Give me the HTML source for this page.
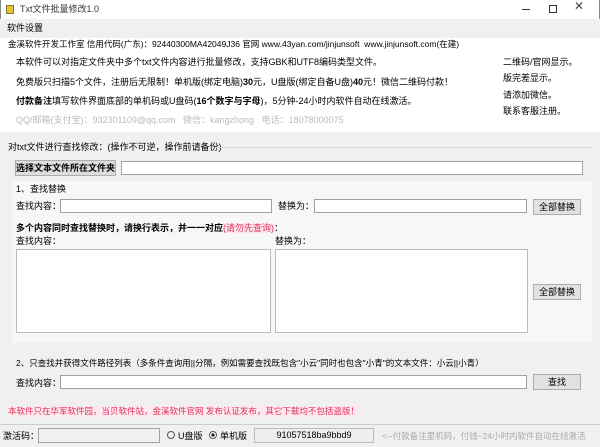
<!DOCTYPE html>
<html><head><meta charset="utf-8"><style>
*{margin:0;padding:0;box-sizing:border-box}
body{width:600px;height:447px;background:#f0f0f0;font-family:"Liberation Sans","Noto Sans CJK SC",sans-serif;font-size:9px;color:#000;position:relative;overflow:hidden}
.a{position:absolute;white-space:nowrap;line-height:11px}
.in{position:absolute;background:#fff;border:1px solid #a0a0a0}
.btn{position:absolute;background:#e1e1e1;border:1px solid #adadad;text-align:center;line-height:14px;font-size:9px}
b{font-weight:bold}
</style></head><body>
<div class="a" style="left:0;top:0;width:600px;height:19px;background:#fff;border-left:1px solid #888;border-right:1px solid #888"></div>
<div class="a" style="left:6px;top:5px;width:8px;height:9px;background:#e0c040;border:1px solid #8a7a20"></div>
<div class="a" style="left:20px;top:4px;color:#333">Txt文件批量修改1.0</div>
<div class="a" style="left:522px;top:9px;width:8px;height:1px;background:#333"></div>
<div class="a" style="left:549px;top:5px;width:8px;height:8px;border:1px solid #333"></div>
<div class="a" style="left:574px;top:1px;font-size:12px;color:#444">✕</div>
<div class="a" style="left:0;top:19px;width:600px;height:18px;background:#f0f0f0"></div>
<div class="a" style="left:7px;top:23px">软件设置</div>
<div class="a" style="left:0;top:38px;width:600px;height:94px;background:#fff"></div>
<div class="a" style="left:8px;top:39px;font-size:8.5px">金溪软件开发工作室 信用代码(广东)：92440300MA42049J36 官网 www.43yan.com/jinjunsoft &nbsp;www.jinjunsoft.com(在建)</div>
<div class="a" style="left:16px;top:57px">本软件可以对指定文件夹中多个txt文件内容进行批量修改，支持GBK和UTF8编码类型文件。</div>
<div class="a" style="left:16px;top:77px">免费版只扫描5个文件，注册后无限制！单机版(绑定电脑)<b>30</b>元，U盘版(绑定自备U盘)<b>40</b>元！微信二维码付款！</div>
<div class="a" style="left:16px;top:96px"><b>付款备注</b>填写软件界面底部的单机码或U盘码(<b>16个数字与字母</b>)，5分钟-24小时内软件自动在线激活。</div>
<div class="a" style="left:16px;top:115px;color:#bbb">QQ/邮箱(支付宝)：932301109@qq.com &nbsp;&nbsp;微信：kangzhong &nbsp;&nbsp;电话：18078000075</div>
<div class="a" style="left:503px;top:57px">二维码/官网显示。</div>
<div class="a" style="left:503px;top:73px">版完差显示。</div>
<div class="a" style="left:503px;top:90px">请添加微信。</div>
<div class="a" style="left:503px;top:106px">联系客服注册。</div>
<div class="a" style="left:8px;top:142px">对txt文件进行查找修改：(操作不可逆，操作前请备份)</div>
<div class="a" style="left:215px;top:147px;width:377px;height:1px;background:#d8d8d8"></div>
<div class="btn" style="left:15px;top:160px;width:101px;height:16px;font-weight:bold;background:#ddd">选择文本文件所在文件夹</div>
<div class="in" style="left:121px;top:161px;width:462px;height:14px"></div>
<div class="a" style="left:12px;top:181px;width:580px;height:162px;background:#f7f7f7"></div>
<div class="a" style="left:16px;top:184px">1、查找替换</div>
<div class="a" style="left:16px;top:201px">查找内容：</div>
<div class="in" style="left:60px;top:199px;width:212px;height:14px"></div>
<div class="a" style="left:278px;top:201px">替换为：</div>
<div class="in" style="left:314px;top:199px;width:213px;height:14px"></div>
<div class="btn" style="left:533px;top:199px;width:48px;height:16px">全部替换</div>
<div class="a" style="left:16px;top:223px"><b>多个内容同时查找替换时，请换行表示，并一一对应</b><span style="color:#e0305a;background:#fde8ee">(请勿先查询)</span>：</div>
<div class="a" style="left:16px;top:236px">查找内容：</div>
<div class="a" style="left:275px;top:236px">替换为：</div>
<div class="in" style="left:16px;top:249px;width:255px;height:84px;border-color:#bbb"></div>
<div class="in" style="left:275px;top:249px;width:253px;height:84px;border-color:#bbb"></div>
<div class="btn" style="left:533px;top:284px;width:48px;height:16px">全部替换</div>
<div class="a" style="left:16px;top:358px;font-size:8.5px">2、只查找并获得文件路径列表（多条件查询用||分隔，例如需要查找既包含"小云"同时也包含"小青"的文本文件：小云||小青）</div>
<div class="a" style="left:16px;top:378px">查找内容：</div>
<div class="in" style="left:60px;top:375px;width:467px;height:14px"></div>
<div class="btn" style="left:533px;top:374px;width:48px;height:16px">查找</div>
<div class="a" style="left:8px;top:406px;color:#e0305a;background:#fdeaf0;font-size:8.5px">本软件只在华军软件园，当贝软件站，金溪软件官网 发布认证发布，其它下载均不包括盗版！</div>
<div class="a" style="left:0;top:424px;width:600px;height:1px;background:#ccc"></div>
<div class="a" style="left:3px;top:431px">激活码：</div>
<div class="in" style="left:38px;top:428px;width:122px;height:15px;background:#f0f0f0"></div>
<div class="a" style="left:167px;top:431px;width:8px;height:8px;border:1px solid #555;border-radius:50%"></div>
<div class="a" style="left:178px;top:431px">U盘版</div>
<div class="a" style="left:209px;top:431px;width:8px;height:8px;border:1px solid #555;border-radius:50%;background:radial-gradient(#222 35%,#fff 45%)"></div>
<div class="a" style="left:220px;top:431px">单机版</div>
<div class="a" style="left:254px;top:428px;width:120px;height:15px;background:#eee;border:1px solid #bbb;text-align:center;line-height:13px">91057518ba9bbd9</div>
<div class="a" style="left:382px;top:431px;color:#aaa;font-size:8.5px">&lt;--付款备注里机码，付钱~24小时内软件自动在线激活</div>
</body></html>
